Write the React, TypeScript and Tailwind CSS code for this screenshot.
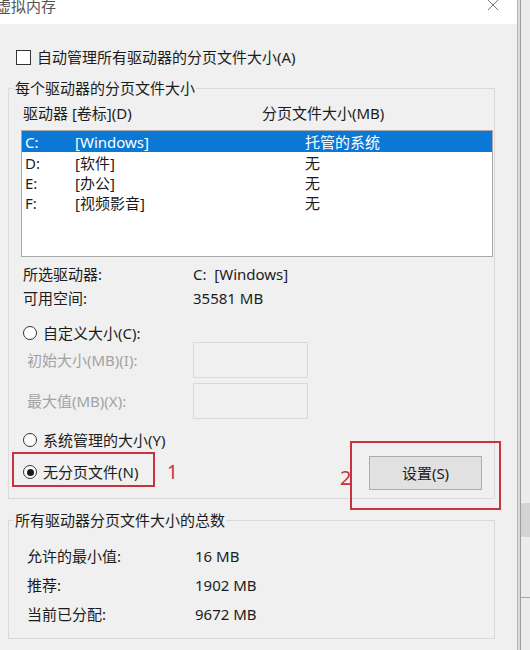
import React from "react";

const drives = [
	{ letter: "C:", label: "[Windows]", size: "托管的系统", selected: true, h: "h-[21px]" },
	{ letter: "D:", label: "[软件]", size: "无", h: "h-[21px]" },
	{ letter: "E:", label: "[办公]", size: "无", h: "h-[20px]" },
	{ letter: "F:", label: "[视频影音]", size: "无", h: "h-[20px]" },
];

function Radio({ checked }: { checked?: boolean }) {
	return (
		<span className="flex h-[14px] w-[14px] shrink-0 items-center justify-center rounded-full border border-[#333] bg-white">
			{checked && <span className="h-[7px] w-[7px] rounded-full bg-[#1a1a1a]" />}
		</span>
	);
}

function DisabledField({ label }: { label: string }) {
	return (
		<div className="flex h-[36px] items-center">
			<span className="w-[175px] pl-[9px] text-[#a3a3a3]">{label}</span>
			<div className="h-[36px] w-[115px] border border-[#d9d9d9] bg-[#f0f0f0]" />
		</div>
	);
}

export default function App() {
	return (
		<div
			className="relative flex h-[650px] w-[530px] overflow-hidden bg-[#e9e9e9] text-[15px] leading-[20px] text-[#1c1c1c]"
			style={{ fontFamily: '"Noto Sans", "Noto Sans CJK SC", sans-serif' }}
		>
			{/* dialog */}
			<div className="flex w-[517px] shrink-0 flex-col bg-[#f0f0f0]">
				<div className="flex h-[24px] items-start justify-between bg-white">
					<span className="-ml-[4px] -mt-[4px] text-[#555]">虚拟内存</span>
					<svg width="12" height="12" viewBox="0 0 12 12" className="mr-[18px] -mt-[1px]">
						<path d="M1 1 L11 11 M11 1 L1 11" stroke="#777" strokeWidth="1" fill="none" />
					</svg>
				</div>

				<div className="px-[8px]">
					<label className="ml-[8px] mt-[23px] flex h-[20px] items-center gap-[6px]">
						<span className="h-[15px] w-[15px] border border-[#333] bg-white" />
						<span>自动管理所有驱动器的分页文件大小(A)</span>
					</label>

					<fieldset className="mt-[11px] w-[487px] border border-[#dadada] p-0">
						<legend className="ml-[5px] px-[1px] leading-[20px]">每个驱动器的分页文件大小</legend>

						<div className="mt-[5px] flex h-[20px] items-center pl-[14px]">
							<span className="w-[239px]">驱动器 [卷标](D)</span>
							<span>分页文件大小(MB)</span>
						</div>

						<div className="ml-[12px] mt-[7px] h-[127px] w-[472px] border border-[#a9a9a9] bg-white">
							{drives.map((d) => (
								<div
									key={d.letter}
									className={
										d.selected
											? "flex h-[21px] items-center bg-[#0a78d4] pl-[3px] text-white"
											: `flex ${d.h} items-center pl-[3px]`
									}
								>
									<span className="w-[50px]">{d.letter}</span>
									<span className="w-[230px]">{d.label}</span>
									<span>{d.size}</span>
								</div>
							))}
						</div>

						<div className="mt-[5px] pl-[14px]">
							<div className="flex h-[24px] items-center">
								<span className="w-[170px]">所选驱动器:</span>
								<span>C:&nbsp;&nbsp;[Windows]</span>
							</div>
							<div className="flex h-[24px] items-center">
								<span className="w-[170px]">可用空间:</span>
								<span>35581 MB</span>
							</div>
						</div>

						<div className="mt-[13px]">
							<div className="flex h-[19px] items-center gap-[6px] pl-[14px]">
								<Radio />
								<span>自定义大小(C):</span>
							</div>
							<div className="pl-[9px]">
								<DisabledField label="初始大小(MB)(I):" />
								<div className="mt-[5px]">
									<DisabledField label="最大值(MB)(X):" />
								</div>
							</div>
						</div>

						<div className="mt-[11px] flex items-start justify-between pb-[8px] pl-[14px] pr-[12px]">
							<div className="flex flex-col gap-[12px]">
								<div className="flex h-[20px] items-center gap-[6px]">
									<Radio />
									<span>系统管理的大小(Y)</span>
								</div>
								<div className="flex h-[20px] items-center gap-[6px]">
									<Radio checked />
									<span>无分页文件(N)</span>
								</div>
							</div>
							<button className="mt-[26px] flex h-[34px] w-[113px] items-center justify-center border border-[#adadad] bg-[#e1e1e1]">
								设置(S)
							</button>
						</div>
					</fieldset>

					<fieldset className="mt-[11px] w-[487px] border border-[#dadada] p-0">
						<legend className="ml-[5px] px-[1px] leading-[20px]">所有驱动器分页文件大小的总数</legend>
						<div className="mt-[12px] pb-[10px] pl-[18px]">
							<div className="flex h-[28px] items-center">
								<span className="w-[168px]">允许的最小值:</span>
								<span>16 MB</span>
							</div>
							<div className="flex h-[29px] items-center">
								<span className="w-[168px]">推荐:</span>
								<span>1902 MB</span>
							</div>
							<div className="flex h-[29px] items-center">
								<span className="w-[168px]">当前已分配:</span>
								<span>9672 MB</span>
							</div>
						</div>
					</fieldset>
				</div>
			</div>

			{/* window edge and the window behind */}
			<div className="w-px shrink-0 bg-[#b4b4b4]" />
			<div className="w-[2px] shrink-0 bg-[#dcdcdc]" />
			<div className="w-px shrink-0 bg-[#9c9c9c]" />
			<div className="flex flex-1 flex-col bg-[#ececec]">
				<div className="h-[503px]" />
				<div className="h-[34px] bg-[#d4d4d4]" />
				<div className="h-[60px]" />
				<div className="h-px bg-[#a8a8a8]" />
			</div>

			{/* red annotations */}
			<div className="pointer-events-none absolute left-[12px] top-[452px] h-[35px] w-[143px] border-2 border-[#c8323e]" />
			<span className="absolute left-[167px] top-[460px] text-[19px] leading-[24px] text-[#c8323e]">1</span>
			<span className="absolute left-[340px] top-[466px] text-[20px] leading-[24px] text-[#c8323e]">2</span>
			<div className="pointer-events-none absolute left-[350px] top-[441px] h-[69px] w-[151px] border-2 border-[#c8323e]" />
		</div>
	);
}
